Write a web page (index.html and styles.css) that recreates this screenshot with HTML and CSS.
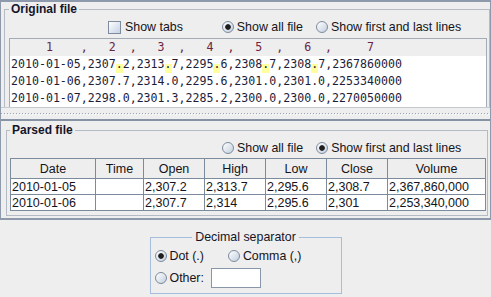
FILE: index.html
```html
<!DOCTYPE html>
<html>
<head>
<meta charset="utf-8">
<link rel="stylesheet" href="styles.css">
</head>
<body>
<div class="split">
  <div class="pane pane-top">
    <fieldset class="group group-top">
      <legend class="title">Original file</legend>
      <div class="opts opts-top">
        <label class="opt"><span class="check"></span>Show tabs</label>
        <label class="opt opt-all"><span class="radio on"></span>Show all file</label>
        <label class="opt opt-first"><span class="radio"></span>Show first and last lines</label>
      </div>
      <div class="textarea">
        <div class="ta-head">     1    ,   2  ,   3  ,   4  ,   5  ,   6  ,     7</div>
        <div class="ta-line">2010-01-05,2307<span class="hl">.</span>2,2313<span class="hl">.</span>7,2295<span class="hl">.</span>6,2308<span class="hl">.</span>7,2308<span class="hl">.</span>7,2367860000</div>
        <div class="ta-line">2010-01-06,2307.7,2314.0,2295.6,2301.0,2301.0,2253340000</div>
        <div class="ta-line">2010-01-07,2298.0,2301.3,2285.2,2300.0,2300.0,2270050000</div>
      </div>
    </fieldset>
  </div>
  <div class="divider"></div>
  <div class="pane pane-bottom">
    <fieldset class="group group-bottom">
      <legend class="title">Parsed file</legend>
      <div class="opts opts-bottom">
        <label class="opt"><span class="radio"></span>Show all file</label>
        <label class="opt opt-first"><span class="radio on"></span>Show first and last lines</label>
      </div>
      <table class="grid">
        <colgroup>
          <col class="c-date"><col class="c-time"><col class="c-num"><col class="c-num"><col class="c-num"><col class="c-num"><col class="c-vol">
        </colgroup>
        <thead>
          <tr><th>Date</th><th>Time</th><th>Open</th><th>High</th><th>Low</th><th>Close</th><th>Volume</th></tr>
        </thead>
        <tbody>
          <tr><td>2010-01-05</td><td></td><td>2,307.2</td><td>2,313.7</td><td>2,295.6</td><td>2,308.7</td><td>2,367,860,000</td></tr>
          <tr><td>2010-01-06</td><td></td><td>2,307.7</td><td>2,314</td><td>2,295.6</td><td>2,301</td><td>2,253,340,000</td></tr>
        </tbody>
      </table>
    </fieldset>
  </div>
</div>
<fieldset class="dec">
  <legend class="dec-title">Decimal separator</legend>
  <div class="dec-row dec-row1">
    <label class="opt"><span class="radio on"></span>Dot (.)</label>
    <label class="opt opt-comma"><span class="radio"></span>Comma (,)</label>
  </div>
  <div class="dec-row">
    <label class="opt"><span class="radio"></span>Other:</label>
    <span class="field"></span>
  </div>
</fieldset>
</body>
</html>
```
FILE: styles.css
```css
html, body {
  margin: 0;
  padding: 0;
}
body {
  width: 491px;
  height: 297px;
  overflow: hidden;
  background: #eeeeee;
  font-family: "Liberation Sans", Arial, sans-serif;
  font-size: 12.4px;
  color: #141420;
}
.split {
  border: 1px solid #8e9aab;
  border-top-width: 2px;
  border-bottom-width: 2px;
}
.pane-top {
  height: 105px;
  overflow: hidden;
  border-bottom: 1px solid #c4cad2;
}
.group {
  min-width: 0;
  border: 1px solid #b4bbc5;
}
.group-top {
  margin: 0 0 0 3px;
  padding: 0 2px 6px 4px;
}
.title {
  padding: 0 2px;
  font-weight: bold;
  font-size: 12px;
  line-height: 14px;
  color: #15152a;
}
.opts {
  display: flex;
  align-items: center;
}
.opts-top {
  height: 22px;
  padding-left: 99px;
}
.opts-bottom {
  height: 21px;
  padding-left: 212px;
}
.opt {
  display: flex;
  align-items: center;
  white-space: nowrap;
}
.opt-all {
  margin-left: 39px;
}
.opt-first {
  margin-left: 13px;
}
.check {
  width: 13px;
  height: 13px;
  box-sizing: border-box;
  border: 1px solid #7d8b9c;
  background: linear-gradient(135deg, #ffffff, #c4d2e3);
  margin-right: 4px;
}
.radio {
  width: 12px;
  height: 12px;
  box-sizing: border-box;
  border-radius: 50%;
  border: 1px solid #7d8b9c;
  background: linear-gradient(135deg, #ffffff, #c2cfdf);
  margin-right: 3px;
}
.radio.on {
  background: radial-gradient(circle at center, #1e1e1e 0, #1e1e1e 2.4px, transparent 3.2px), linear-gradient(135deg, #ffffff, #c2cfdf);
}
.textarea {
  border: 1px solid #a3abb5;
  background: #ffffff;
  font-family: "DejaVu Sans Mono", monospace;
  font-size: 11.6px;
  line-height: 17px;
  color: #1d1d3a;
}
.ta-head,
.ta-line {
  white-space: pre;
  padding-left: 1px;
}
.ta-head {
  background: #eeeeee;
  color: #6a2444;
}
.hl {
  display: inline-block;
  height: 17px;
  vertical-align: top;
  background: linear-gradient(transparent 8px, #ffff9e 8px);
}
.divider {
  height: 11px;
  background:
    repeating-linear-gradient(90deg, #9ba6b4 0 1px, transparent 1px 3px) 0 5px / 100% 1px no-repeat,
    repeating-linear-gradient(90deg, transparent 0 1px, #ffffff 1px 2px, transparent 2px 3px) 0 6px / 100% 1px no-repeat;
}
.pane-bottom {
  border-top: 2px solid #8593a4;
  padding: 2px 2px 2px 5px;
}
.group-bottom {
  margin: 0;
  padding: 0 1px 4px 3px;
}
.grid {
  border-collapse: collapse;
  table-layout: fixed;
  width: 476px;
  font-size: 12.5px;
  color: #141420;
}
.c-date { width: 85px; }
.c-time { width: 48px; }
.c-num { width: 61px; }
.c-vol { width: 98px; }
.grid th,
.grid td {
  border: 1px solid #7c8b9b;
  padding: 0 1px;
  white-space: nowrap;
  overflow: hidden;
}
.grid thead tr {
  height: 20px;
}
.grid tbody tr {
  height: 16px;
}
.grid th {
  font-weight: normal;
  background: #eeeeee;
  text-align: center;
}
.grid td {
  background: #ffffff;
  text-align: left;
  line-height: 14px;
}
.dec {
  width: 192px;
  box-sizing: border-box;
  margin: 10px auto 0;
  border: 1px solid #a6bedb;
  padding: 1px 4px 4px 4px;
}
.dec-title {
  margin: 0 auto;
  padding: 0 3px;
  line-height: 14px;
  color: #15152a;
}
.dec-row {
  display: flex;
  align-items: center;
  height: 22px;
}
.opt-comma {
  margin-left: 24px;
}
.field {
  width: 50px;
  height: 20px;
  box-sizing: border-box;
  border: 1px solid #8796a8;
  background: #ffffff;
  margin-left: 7px;
}
```
